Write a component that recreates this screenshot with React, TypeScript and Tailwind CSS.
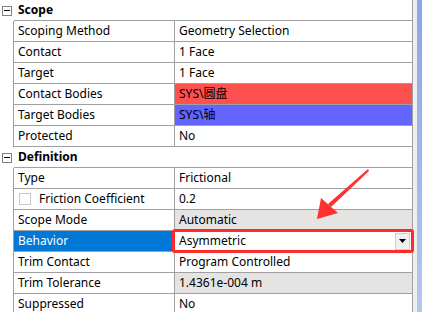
import React from 'react';

type Row = {
  label: string;
  value: string;
  valueBg?: string;
  check?: boolean;
  selected?: boolean;
};

const SCOPE: Row[] = [
  { label: 'Scoping Method', value: 'Geometry Selection' },
  { label: 'Contact', value: '1 Face' },
  { label: 'Target', value: '1 Face' },
  { label: 'Contact Bodies', value: 'SYS\\圆盘', valueBg: 'bg-[#ff5050]' },
  { label: 'Target Bodies', value: 'SYS\\轴', valueBg: 'bg-[#6464ff]' },
  { label: 'Protected', value: 'No' },
];

const DEFINITION: Row[] = [
  { label: 'Type', value: 'Frictional' },
  { label: 'Friction Coefficient', value: '0.2', check: true },
  { label: 'Scope Mode', value: 'Automatic', valueBg: 'bg-[#e5e4e2]' },
  { label: 'Behavior', value: 'Asymmetric', selected: true },
  { label: 'Trim Contact', value: 'Program Controlled' },
  { label: 'Trim Tolerance', value: '1.4361e-004 m', valueBg: 'bg-[#e5e4e2]' },
  { label: 'Suppressed', value: 'No' },
];

function Header({ title }: { title: string }) {
  return (
    <div className="flex h-[21px]">
      <div className="w-[14px] shrink-0 flex items-center justify-center">
        <div className="w-[10px] h-[10px] border border-[#808080] bg-white flex items-center justify-center">
          <div className="w-[6px] h-px bg-black" />
        </div>
      </div>
      <div className="flex-1 flex items-center pl-[4px] font-bold border-b border-[#a0a0a0]">{title}</div>
    </div>
  );
}

function PropRow({ row }: { row: Row }) {
  return (
    <div className="flex h-[21px]">
      <div className="w-[14px] shrink-0 bg-white border-r border-[#a0a0a0]" />
      <div
        className={`w-[161px] shrink-0 flex items-center border-r border-b border-[#a0a0a0] pl-[4px] ${
          row.selected ? 'bg-[#0078d7] text-white' : ''
        }`}
      >
        {row.check && (
          <div className="w-[12px] h-[12px] border border-[#c8c8c8] bg-white mr-[8px] ml-[1px]" />
        )}
        {row.label}
      </div>
      {row.selected ? (
        <div className="flex-1 relative bg-white border-b border-[#a0a0a0]">
          <div className="absolute left-[-3px] right-[-2px] top-[-2px] bottom-[-2px] border-[3px] border-[#ff2a2a] rounded-[3px] z-10" />
          <div className="h-full flex items-center pl-[4px] pr-[2px]">
            <span className="flex-1">{row.value}</span>
            <div className="w-[15px] h-[17px] bg-[#f0f0f0] border border-[#d0d0d0] flex items-center justify-center">
              <svg width="7" height="4" viewBox="0 0 7 4">
                <polygon points="0,0 7,0 3.5,4" fill="#000" />
              </svg>
            </div>
          </div>
        </div>
      ) : (
        <div className={`flex-1 flex items-center pl-[4px] border-b border-[#a0a0a0] ${row.valueBg ?? 'bg-white'}`}>
          {row.value}
        </div>
      )}
    </div>
  );
}

export default function App() {
  return (
    <div
      className="relative w-[422px] h-[312px] overflow-hidden bg-white text-[12px] text-black leading-none flex"
      style={{ fontFamily: '"Noto Sans", "Noto Sans CJK SC", sans-serif' }}
    >
      <div className="w-[413px] shrink-0 border-r border-[#a0a0a0]">
        <Header title="Scope" />
        {SCOPE.map((r) => (
          <PropRow key={r.label} row={r} />
        ))}
        <Header title="Definition" />
        {DEFINITION.map((r) => (
          <PropRow key={r.label} row={r} />
        ))}
      </div>
      <div className="w-[4px] bg-[#efefef]" />
      <div className="flex-1 bg-gradient-to-b from-[#8aa6e8] to-[#b6c6ee]" />

      {/* 빨간 화살표 */}
      <svg className="absolute left-0 top-0 pointer-events-none z-20" width="422" height="312">
        <polygon points="368,169 369,171 331,207 328,204" fill="#ff3030" />
        <polygon points="317,219 321,198 338,213" fill="#ff3030" />
      </svg>
    </div>
  );
}
